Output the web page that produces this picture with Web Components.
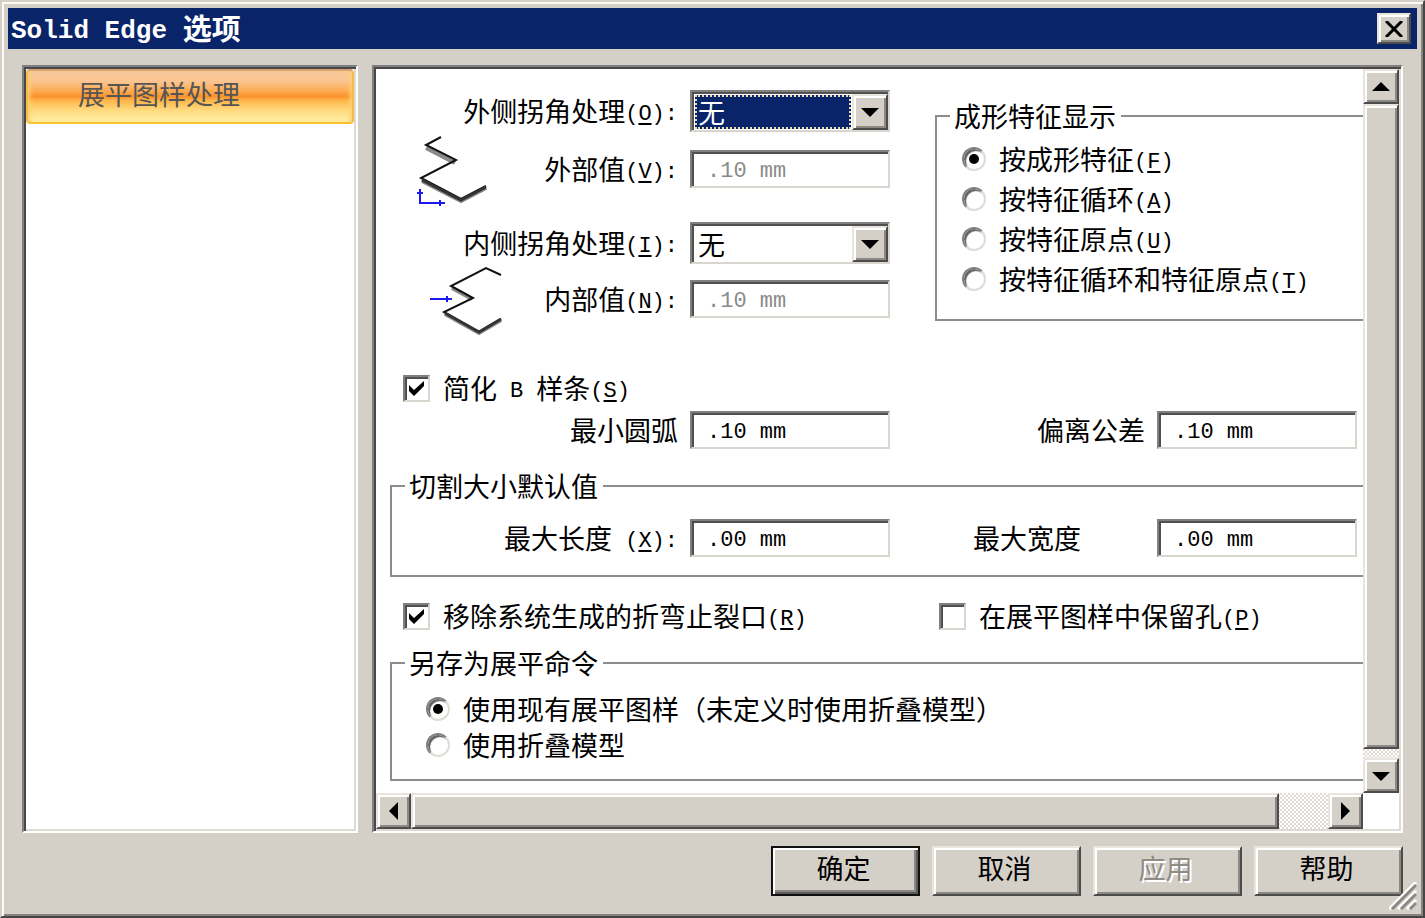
<!DOCTYPE html>
<html lang="zh-CN">
<head>
<meta charset="utf-8">
<title>Solid Edge 选项</title>
<style>
  body {
    margin: 0;
    background: #d4d0c8;
    color: #000;
    font: 27px/30px "Noto Sans CJK SC", sans-serif;
    --face: #d4d0c8;
    --navy: #0a246a;
    --mono: "Liberation Mono", "Noto Sans CJK SC", monospace;
  }
  .top { display: flex; align-items: flex-start; gap: 45px; }
  .corners {
    display: grid;
    flex: none;
    grid-template-columns: 25px 275px 200px;
    grid-template-rows: 42px 74px 16px 42px 70px;
    align-items: center;
  }
  .corners labeled-field, .corners labeled-combo { grid-column: 1 / 4; }
  .corners bend-icon { grid-column: 2; }
  .r1 { grid-row: 1; } .r2 { grid-row: 2; } .r4 { grid-row: 4; } .r5 { grid-row: 5; }
  .top group-box { flex: 1; margin-top: 11px; --pad: 8px 0 20px 25px; }
  .checks { display: grid; grid-template-columns: 536px 1fr; padding-left: 13px; }
  .spline { margin-top: 34px; }
  .keep { margin-top: 19px; }
  .pair { display: flex; justify-content: space-between; padding-right: 6px; }
  .pair labeled-field:first-child { width: 500px; }
  .spline + .pair { margin-top: 3px; }
  .cut { margin-top: 22px; --pad: 18px 0; }
  .cut .pair labeled-field:first-child { width: 498px; }
  .cut .wide { width: 384px; --label-align: left; }
  .saveas { margin-top: 12px; --pad: 13px 0 16px 34px; --row: 36px; }
</style>
</head>
<body>

<dialog-window caption="Solid Edge 选项">
  <nav-list slot="nav"><nav-item>展平图样处理</nav-item></nav-list>

  <scroll-pane slot="main">
    <div class="top">
      <div class="corners">
        <labeled-combo class="r1" key="O" colon active value="无">外侧拐角处理</labeled-combo>
        <bend-icon class="r2" kind="outer"></bend-icon>
        <labeled-field class="r2" key="V" colon disabled value=".10 mm">外部值</labeled-field>
        <labeled-combo class="r4" key="I" colon value="无">内侧拐角处理</labeled-combo>
        <bend-icon class="r5" kind="inner"></bend-icon>
        <labeled-field class="r5" key="N" colon disabled value=".10 mm">内部值</labeled-field>
      </div>
      <group-box caption="成形特征显示">
        <choice-item type="radio" group="form" key="F" checked>按成形特征</choice-item>
        <choice-item type="radio" group="form" key="A">按特征循环</choice-item>
        <choice-item type="radio" group="form" key="U">按特征原点</choice-item>
        <choice-item type="radio" group="form" key="T">按特征循环和特征原点</choice-item>
      </group-box>
    </div>

    <div class="checks spline">
      <choice-item type="checkbox" key="S" checked>简化 <mono-text>B</mono-text> 样条</choice-item>
    </div>
    <div class="pair">
      <labeled-field value=".10 mm">最小圆弧</labeled-field>
      <labeled-field value=".10 mm">偏离公差</labeled-field>
    </div>

    <group-box class="cut" caption="切割大小默认值">
      <div class="pair">
        <labeled-field key="X" spaced colon value=".00 mm">最大长度</labeled-field>
        <labeled-field class="wide" value=".00 mm">最大宽度</labeled-field>
      </div>
    </group-box>

    <div class="checks keep">
      <choice-item type="checkbox" key="R" checked>移除系统生成的折弯止裂口</choice-item>
      <choice-item type="checkbox" key="P">在展平图样中保留孔</choice-item>
    </div>

    <group-box class="saveas" caption="另存为展平命令">
      <choice-item type="radio" group="save" checked>使用现有展平图样（未定义时使用折叠模型）</choice-item>
      <choice-item type="radio" group="save">使用折叠模型</choice-item>
    </group-box>
  </scroll-pane>

  <push-button slot="actions" default>确定</push-button>
  <push-button slot="actions">取消</push-button>
  <push-button slot="actions" disabled>应用</push-button>
  <push-button slot="actions">帮助</push-button>
</dialog-window>

<script>
  const RESET = `*, *::before, *::after { box-sizing: border-box; }
    button, input, select { font: inherit; color: inherit; margin: 0; padding: 0; border-radius: 0; outline: none; appearance: none; }`;
  /* Two-ring bevels: sunken for wells, raised for buttons. */
  const SUNKEN = `border: 2px solid; border-color: #808080 #d9d6cf #d9d6cf #808080; box-shadow: inset 2px 2px #505050;`;
  const RAISED = `background: var(--face); border: 2px solid; border-color: #e8e5de #4c4c4c #4c4c4c #e8e5de;
    box-shadow: inset 2px 2px #fff, inset -2px -2px #8c8984;`;

  function define(name, render, after) {
    customElements.define(name, class extends HTMLElement {
      connectedCallback() {
        if (this.shadowRoot) return;
        const root = this.attachShadow({ mode: "open" });
        root.innerHTML = render(this);
        if (after) after(this, root);
      }
    });
  }

  const hint = el => {
    const key = el.getAttribute("key");
    if (!key) return "";
    return `<span class="key">${el.hasAttribute("spaced") ? "&nbsp;" : ""}(<u>${key}</u>)${el.hasAttribute("colon") ? ":" : ""}</span>`;
  };
  const KEY = `.key { font: 22px/16px var(--mono); white-space: pre; vertical-align: 2px; }
    u { text-decoration-thickness: 2px; text-underline-offset: 3px; }`;
  const tri = {
    up: "0,8 18,8 9,-1", down: "0,0 18,0 9,9", left: "9,-5 9,13 0,4", right: "0,-5 0,13 9,4"
  };
  const arrow = dir => `<svg width="${dir === "left" || dir === "right" ? 9 : 18}" height="8" overflow="visible" aria-hidden="true"><polygon points="${tri[dir]}"/></svg>`;

  define("mono-text", () => `<style>:host { font: 22px/16px var(--mono); margin: 0 7px; vertical-align: 2px; }</style><slot></slot>`);

  define("dialog-window", el => `<style>${RESET}
    :host { display: flex; flex-direction: column; box-sizing: border-box; min-height: 100vh; padding: 4px;
      background: var(--face); border: 2px solid; border-color: #d4d0c8 #454545 #454545 #d4d0c8;
      box-shadow: inset 2px 2px #fbfaf7, inset -2px -2px #85837e; }
    header { display: flex; align-items: center; justify-content: space-between; height: 41px; margin: 2px;
      padding: 0 6px 0 3px; background: var(--navy); color: #fff; }
    h1 { margin: 0; padding-bottom: 4px; font: bold 29px/36px "Noto Sans CJK SC", sans-serif; }
    h1 span { font: bold 26px/24px var(--mono); white-space: pre; vertical-align: 2px; }
    .close { display: grid; place-items: center; width: 34px; height: 31px; ${RAISED} color: #000; }
    .body { flex: 1; display: grid; grid-template-columns: 336px minmax(0, 1fr); gap: 14px; padding: 14px 16px 0 16px; }
    ::slotted([slot=nav]), ::slotted([slot=main]) { min-width: 0; }
    footer { position: relative; display: flex; justify-content: flex-end; gap: 12px; padding: 13px 16px 16px; }
    .grip { position: absolute; right: 2px; bottom: 2px; }
    </style>
    <header><h1></h1><button class="close" aria-label="关闭">
      <svg width="18" height="16" viewBox="0 0 18 16"><path d="M1 0 17 16M17 0 1 16" stroke="#000" stroke-width="3"/></svg></button></header>
    <div class="body"><slot name="nav"></slot><slot name="main"></slot></div>
    <footer><slot name="actions"></slot>
      <svg class="grip" width="28" height="28" aria-hidden="true"><g stroke-width="3"><path stroke="#fff" d="M0 27 27 0M9 27 27 9M18 27 27 18"/><path stroke="#8c8984" d="M3 27 27 3M12 27 27 12M21 27 27 21"/></g></svg>
    </footer>`,
    (el, root) => {
      const [, latin, rest] = el.getAttribute("caption").match(/^([\x20-\x7e]*)(.*)$/);
      const span = document.createElement("span");
      span.textContent = latin;
      root.querySelector("h1").append(span, rest);
    });

  define("nav-list", () => `<style>
    :host { display: block; box-sizing: border-box; background: #fff; padding: 2px;
      border: 2px solid; border-color: #808080 #fff #fff #808080; box-shadow: inset 2px 2px #484848, inset -2px -2px #dedbd5; }
    </style><nav><slot></slot></nav>`);

  define("nav-item", () => `<style>
    :host { display: block; }
    a { display: block; height: 55px; box-sizing: border-box; padding-left: 50px; border-radius: 4px; line-height: 46px;
      border: 2px solid; border-color: #dba06f #f5ba4c #f4c530 #f5ba4c; color: #555; text-decoration: none;
      background: linear-gradient(#f6c8a0 0%, #fbc591 20%, #fda94f 40%, #fb912b 50%, #fdb64b 58%, #ffdc80 78%, #fff0a8 100%);
      box-shadow: inset 4px 0 4px -2px #ffd070, inset -4px 0 4px -2px #ffd070; }
    </style><a href="#flat" aria-current="page"><slot></slot></a>`);

  define("scroll-pane", () => `<style>${RESET}
    :host { display: grid; box-sizing: border-box; grid-template: 1fr 36px / minmax(0, 1fr) 36px; background: #fff;
      padding: 2px; border: 2px solid; border-color: #808080 #fff #fff #808080;
      box-shadow: inset 2px 2px #484848, inset -2px -2px #dedbd5; }
    .view { overflow: hidden; padding: 21px 0 10px 14px; }
    </style><div class="view"><slot></slot></div><scroll-bar dir="v"></scroll-bar><scroll-bar dir="h"></scroll-bar>`);

  define("scroll-bar", el => {
    const v = el.getAttribute("dir") === "v";
    return `<style>${RESET}
    :host { display: flex; flex-direction: ${v ? "column" : "row"};
      background: repeating-conic-gradient(#fff 0 25%, #dedbd5 0 50%) 0 0 / 4px 4px; }
    button { flex: none; display: grid; place-items: center; ${v ? "height: 35px" : "width: 35px"}; ${RAISED} }
    .thumb { flex: ${v ? 644 : 866} 0 0px; ${RAISED} }
    .rest { flex: ${v ? 9 : 49} 0 0px; }
    </style><button aria-label="${v ? "向上" : "向左"}">${arrow(v ? "up" : "left")}</button>
    <div class="thumb"></div><div class="rest"></div>
    <button aria-label="${v ? "向下" : "向右"}">${arrow(v ? "down" : "right")}</button>`;
  });

  const FIELD = `:host { display: block; }
    .row { display: flex; align-items: center; justify-content: flex-end; gap: 12px; }
    label { flex: 1; text-align: var(--label-align, right); white-space: nowrap; }
    ${KEY}`;

  define("labeled-field", el => `<style>${RESET}${FIELD}
    input { width: 200px; height: 38px; padding: 4px 4px 0 15px; background: #fff; font: 22px/30px var(--mono); ${SUNKEN} }
    input:disabled { color: #8a8a8a; }
    </style><div class="row"><label for="f"><slot></slot>${hint(el)}</label>
    <input id="f" type="text" value="${el.getAttribute("value")}" ${el.hasAttribute("disabled") ? "disabled" : ""}></div>`);

  define("labeled-combo", el => `<style>${RESET}${FIELD}
    .box { display: flex; width: 200px; height: 42px; padding: 2px 0 0 2px; background: #fff; ${SUNKEN} }
    select { flex: 1; min-width: 0; margin: 1px; padding-left: 1px; border: 2px solid #fff; background: #fff; line-height: 28px; }
    :host([active]) select { border: 2px dotted #e8dcae; background: var(--navy); background-clip: border-box; color: #fff; }
    .drop { flex: none; display: grid; place-items: center; width: 36px; pointer-events: none; ${RAISED} }
    </style><div class="row"><label for="f"><slot></slot>${hint(el)}</label>
    <div class="box"><select id="f"><option>${el.getAttribute("value")}</option></select><span class="drop">${arrow("down")}</span></div></div>`);

  define("group-box", el => `<style>
    :host { display: block; min-width: 0; }
    fieldset { margin: 0; min-width: 0; border: 2px solid #8c8c8c; border-right: 0; padding: 0; }
    legend { margin-left: 13px; padding: 0 5px 0 4px; line-height: 30px; }
    .items { padding: var(--pad); }
    </style><fieldset><legend>${el.getAttribute("caption")}</legend><div class="items"><slot></slot></div></fieldset>`);

  define("choice-item", el => `<style>${RESET}${KEY}
    :host { display: block; }
    label { display: flex; align-items: center; height: var(--row, 40px); white-space: nowrap; }
    .mark { display: grid; flex: none; margin-right: 13px; }
    .mark > * { grid-area: 1 / 1; place-self: center; }
    .mark svg { pointer-events: none; visibility: hidden; }
    input:checked + svg { visibility: visible; }
    [type=checkbox] { width: 27px; height: 27px; background: #fff; ${SUNKEN} }
    [type=radio] { width: 24px; height: 24px; border-radius: 50%; background: #fff;
      border: 2px solid; border-color: #808080 #e0ddd6 #e0ddd6 #808080; box-shadow: inset 2px 2px 1px #606060; }
    </style><label><span class="mark"><input type="${el.getAttribute("type")}" ${el.hasAttribute("checked") ? "checked" : ""}>
    ${el.getAttribute("type") === "radio"
      ? `<svg width="10" height="10"><circle cx="5" cy="5" r="5"/></svg>`
      : `<svg width="17" height="17"><path d="M1 5v6l5 5L16 6V1L6 10z"/></svg>`}
    </span><span><slot></slot>${hint(el)}</span></label>`,
    (el, root) => root.querySelector("input").addEventListener("change", () => {
      const group = el.getAttribute("group");
      if (group) document.querySelectorAll(`choice-item[group=${group}]`).forEach(o => {
        if (o !== el) o.shadowRoot.querySelector("input").checked = false;
      });
    }));

  define("push-button", el => `<style>${RESET}
    button { display: block; width: 149px; height: 50px; line-height: 40px; padding: 0 4px 6px 0; ${RAISED} }
    :host([default]) button { border-color: #111; box-shadow: inset 2px 2px #fff, inset -2px -2px #5c5c5c, inset -4px -4px #8c8984; }
    button:disabled { color: #8f8c86; text-shadow: 2px 2px #fff; }
    </style><button type="button" ${el.hasAttribute("disabled") ? "disabled" : ""}><slot></slot></button>`);

  /* Folded sheet profiles; the blue arrows mark the measured side. */
  define("bend-icon", el => {
    const outer = el.getAttribute("kind") === "outer";
    return `<style>:host { display: block; height: 70px; } svg { display: block; overflow: visible; }</style>
    <svg width="92" height="70" fill="none" aria-hidden="true">` + (outer
      ? `<g stroke="#8a8a8a" stroke-width="4"><path d="M11 14 40 29M7 47l39 20 25-13"/></g>
         <path d="M26 3 11 11l30 15L6 44l40 21 25-13" stroke="#111" stroke-width="2"/>
         <path d="M7 46l39 20 25-13" stroke="#333" stroke-width="3"/>
         <path d="M5 55v14h25M2 59h6M25 66v6" stroke="#1a1af0" stroke-width="2"/>`
      : `<g stroke="#8a8a8a" stroke-width="4"><path d="M37 24l20 11M30 50l34 19 22-13"/></g>
         <path d="M86 11 71 4 36 22l22 12L29 48l35 20 22-13" stroke="#111" stroke-width="2"/>
         <path d="M30 49l34 19 22-13" stroke="#333" stroke-width="3"/>
         <path d="M15 35h22M32 32v6" stroke="#1a1af0" stroke-width="2"/>`) + `</svg>`;
  });
</script>
</body>
</html>
